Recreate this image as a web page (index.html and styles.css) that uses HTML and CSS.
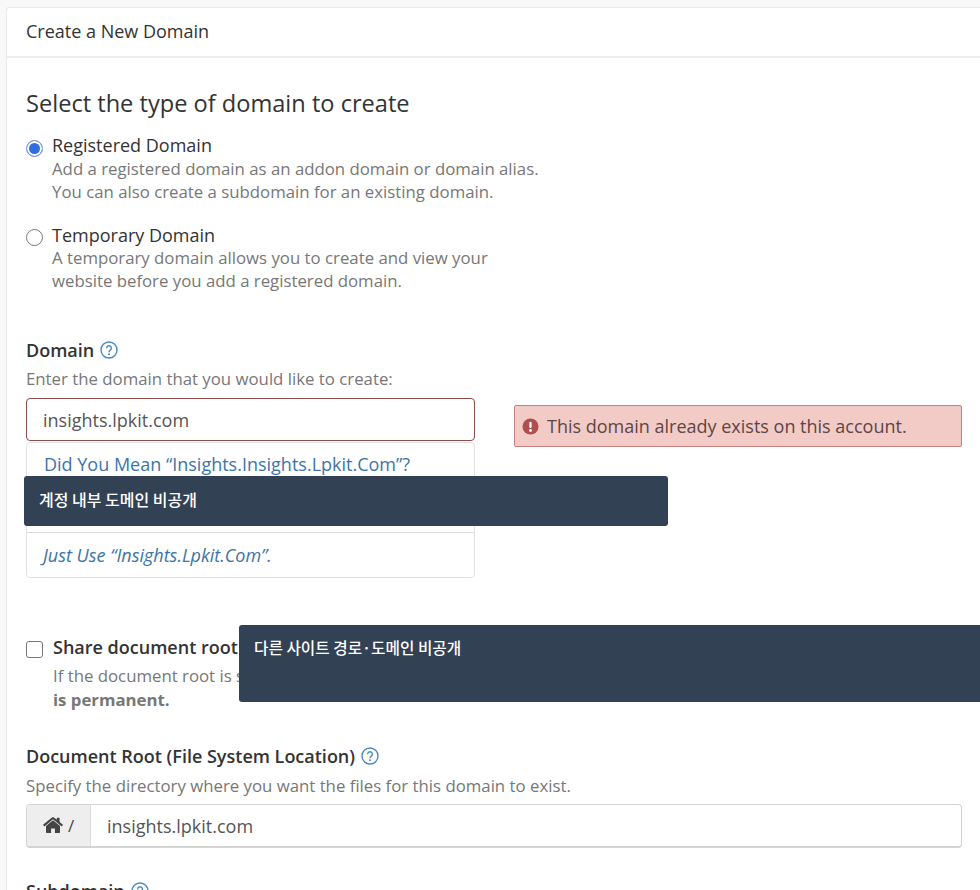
FILE: index.html
```html
<!DOCTYPE html>
<html>
<head>
<meta charset="utf-8">
<title>Create a New Domain</title>
<link rel="stylesheet" href="styles.css">
</head>
<body>

<div class="panel">
  <div class="panel-heading">Create a New Domain</div>
  <div class="panel-body">
    <h2>Select the type of domain to create</h2>

    <div class="radio-row first">
      <span class="radio checked"></span>
      <div>
        <div class="option-name">Registered Domain</div>
        <div class="help">Add a registered domain as an addon domain or domain alias.<br>You can also create a subdomain for an existing domain.</div>
      </div>
    </div>
    <div class="radio-row second">
      <span class="radio"></span>
      <div>
        <div class="option-name">Temporary Domain</div>
        <div class="help">A temporary domain allows you to create and view your<br>website before you add a registered domain.</div>
      </div>
    </div>

    <div class="field-label domain-label">Domain
      <svg class="help-icon" viewBox="0 0 18 18"><circle cx="9" cy="9" r="8"/><path d="M6.600 7.200a2.400 2.400 0 1 1 3.700 2c-.9.6-1.300 1-1.300 2"/><circle class="dot" cx="9" cy="13.300" r="1"/></svg>
    </div>
    <div class="help field-help">Enter the domain that you would like to create:</div>

    <div class="domain-row">
      <div class="domain-col">
        <input class="text-input error" type="text" value="insights.lpkit.com">
        <div class="suggestions">
          <a class="suggestion">Did You Mean “Insights.Insights.Lpkit.Com”?</a>
          <a class="suggestion blank"></a>
          <a class="suggestion just-use">Just Use “Insights.Lpkit.Com”.</a>
        </div>
      </div>
      <div class="alert">
        <svg class="alert-icon" viewBox="0 0 18 18"><circle cx="9" cy="9" r="8.500"/><rect x="7.800" y="4" width="2.400" height="6.600" rx="1"/><circle cx="9" cy="13.200" r="1.500"/></svg>
        This domain already exists on this account.
      </div>
    </div>

    <div class="check-row">
      <span class="checkbox"></span>
      <div>
        <div class="check-name">Share document root</div>
        <div class="help">If the document root is shared<br><b>is permanent.</b></div>
      </div>
    </div>

    <div class="field-label docroot-label">Document Root (File System Location)
      <svg class="help-icon" viewBox="0 0 18 18"><circle cx="9" cy="9" r="8"/><path d="M6.600 7.200a2.400 2.400 0 1 1 3.700 2c-.9.6-1.300 1-1.300 2"/><circle class="dot" cx="9" cy="13.300" r="1"/></svg>
    </div>
    <div class="help field-help docroot-help">Specify the directory where you want the files for this domain to exist.</div>

    <div class="input-group">
      <span class="addon">
        <svg class="home-icon" viewBox="0 0 20 17"><path d="M10 3.200 3 9v6.200c0 .4.3.8.8.8h4.300v-4.600h3.800V16h4.300c.5 0 .8-.4.8-.8V9z"/><path d="M19.700 7.600 16.600 5V1.200c0-.2-.2-.4-.4-.4h-2c-.2 0-.4.2-.4.4v1.600L11 .5C10.400 0 9.600 0 9 .5L.3 7.600c-.2.100-.2.400 0 .600l.8 1c.2.200.4.200.6 0L10 2.300l8.300 6.900c.2.200.4.200.6 0l.8-1c.2-.2.2-.5 0-.6z"/></svg>
        /
      </span>
      <span class="group-value">insights.lpkit.com</span>
    </div>

    <div class="field-label subdomain-label">Subdomain
      <svg class="help-icon" viewBox="0 0 18 18"><circle cx="9" cy="9" r="8"/><path d="M6.600 7.200a2.400 2.400 0 1 1 3.700 2c-.9.6-1.300 1-1.300 2"/><circle class="dot" cx="9" cy="13.300" r="1"/></svg>
    </div>
  </div>
</div>

<!-- redaction boxes over the screenshot -->
<div class="redact redact-domain">계정 내부 도메인 비공개</div>
<div class="redact redact-path">다른 사이트 경로·도메인 비공개</div>

</body>
</html>
```

FILE: styles.css
```css
html, body {
    height: 890px;
    overflow: hidden;
}

body {
    position: relative;
    margin: 0;
    padding: 7px 0 0 6px;
    background: #f8f8f8;
    color: #333;
    font-family: "Open Sans", "Liberation Sans", sans-serif;
    font-size: 18px;
    box-sizing: border-box;
}

.panel {
    background: #fff;
    border-left: 1px solid #e9e9e9;
    border-top: 1px solid #e9e9e9;
    border-radius: 3px 0 0 0;
    height: 900px;
}

.panel-heading {
    height: 48px;
    line-height: 47px;
    padding-left: 19px;
    font-size: 18px;
    color: #333;
    border-bottom: 2px solid #eee;
}

.panel-body {
    padding: 0 18px 0 19px;
}

h2 {
    margin: 0;
    padding-top: 28px;
    font-size: 23.600px;
    line-height: 34px;
    font-weight: 500;
    color: #333;
}

.radio-row,
.check-row {
    display: flex;
    align-items: flex-start;
}

.radio-row.first {
    margin-top: 14px;
}

.radio-row.second {
    margin-top: 21px;
}

.radio-row.second .help {
    margin-top: -1px;
}

.radio {
    flex: none;
    width: 17px;
    height: 17px;
    box-sizing: border-box;
    margin: 6px 9px 0 0;
    border: 1px solid #777;
    border-radius: 50%;
    background: #fff;
}

.radio-row.second .radio {
    margin-top: 5px;
}

.radio.checked {
    border: 1px solid #7b9fdc;
    background: #2f6de0;
    box-shadow: inset 0 0 0 2px #fff;
}

.option-name {
    font-size: 18px;
    line-height: 23px;
}

.help {
    font-size: 16.800px;
    line-height: 23px;
    color: #777;
}

.help b {
    font-weight: 700;
}

.field-label {
    font-size: 18px;
    line-height: 24px;
    font-weight: 600;
    display: flex;
    align-items: center;
    gap: 6px;
}

.domain-label {
    margin-top: 46px;
}

.help-icon {
    width: 18px;
    height: 18px;
    fill: none;
    stroke: #4a8ac0;
    stroke-width: 1.400;
}

.help-icon .dot {
    fill: #4a8ac0;
    stroke: none;
}

.field-help {
    margin-top: 5px;
}

.domain-row {
    display: flex;
    align-items: flex-start;
    margin-top: 8px;
}

.domain-col {
    flex: none;
    width: 449px;
}

.text-input {
    display: block;
    width: 100%;
    height: 43px;
    box-sizing: border-box;
    padding: 0 16px;
    border: 1px solid #8f4a4a;
    border-radius: 4px;
    background: #fff;
    color: #555;
    font-family: inherit;
    font-size: 18px;
}

.suggestions {
    margin-top: 1px;
    border: 1px solid #e2e2e2;
    border-radius: 4px;
    display: flex;
    flex-direction: column;
}

.suggestion {
    display: block;
    height: 44px;
    line-height: 44px;
    padding: 0 17px;
    box-sizing: border-box;
    color: #3d74a8;
    font-size: 18px;
}

.suggestion:first-child {
    line-height: 42px;
}

.suggestion.blank {
    border-bottom: 1px solid #ddd;
    height: 46px;
}

.suggestion.just-use {
    padding: 0 16px;
    font-style: italic;
}

.alert {
    flex: none;
    width: 448px;
    height: 42px;
    box-sizing: border-box;
    margin: 7px 0 0 39px;
    padding-left: 7px;
    display: flex;
    align-items: center;
    gap: 8px;
    background: #f2cbc7;
    border: 1px solid #c98080;
    border-radius: 2px;
    color: #5d4545;
    font-size: 18px;
}

.alert-icon {
    flex: none;
    width: 17px;
    height: 17px;
    fill: #fff;
}

.alert-icon circle:first-child {
    fill: #ac4f4f;
}

.check-row {
    margin-top: 57px;
}

.checkbox {
    flex: none;
    width: 17px;
    height: 17px;
    box-sizing: border-box;
    margin: 6px 10px 0 0;
    border: 1px solid #777;
    border-radius: 3px;
    background: #fff;
}

.check-name {
    font-size: 18px;
    line-height: 24px;
    font-weight: 600;
}

.check-row .help {
    margin-top: 5px;
    line-height: 24px;
}

.docroot-label {
    margin-top: 32px;
}

.docroot-help {
    margin-top: 6px;
}

.input-group {
    display: flex;
    width: 936px;
    height: 44px;
    margin-top: 7px;
    box-sizing: border-box;
    border: 1px solid #d4d4d4;
    border-bottom-width: 2px;
    border-radius: 4px;
    overflow: hidden;
}

.addon {
    flex: none;
    width: 64px;
    box-sizing: border-box;
    display: flex;
    align-items: center;
    justify-content: center;
    gap: 5px;
    background: #eee;
    border-right: 1px solid #ddd;
    color: #444;
    font-size: 17px;
}

.home-icon {
    width: 20px;
    height: 17px;
    fill: #444;
}

.group-value {
    padding-left: 16px;
    line-height: 42px;
    color: #555;
    font-size: 18px;
}

.subdomain-label {
    margin-top: 31px;
}

.redact {
    position: absolute;
    box-sizing: border-box;
    background: #334155;
    color: #fff;
    font-family: "Noto Sans CJK KR", "Noto Sans", sans-serif;
    font-size: 16px;
    font-weight: 500;
    padding-left: 15px;
    border-radius: 3px;
}

.redact-domain {
    left: 24px;
    top: 476px;
    width: 644px;
    height: 50px;
    line-height: 46px;
}

.redact-path {
    left: 239px;
    top: 625px;
    width: 741px;
    height: 77px;
    line-height: 45px;
    font-size: 15.700px;
    border-radius: 3px 0 0 3px;
}
```
